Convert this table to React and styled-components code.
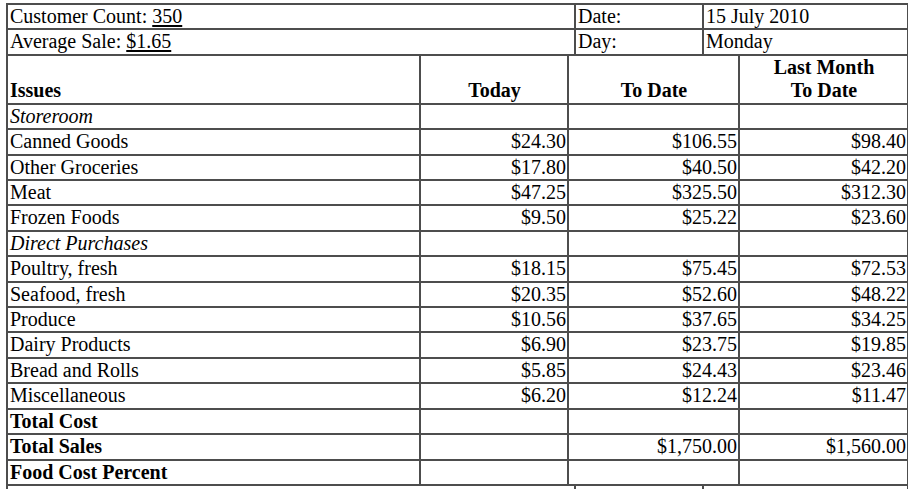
import React from 'react';
import styled, { createGlobalStyle } from 'styled-components';

const GlobalStyle = createGlobalStyle`
  body {
    margin: 0;
    background: #fff;
    color: #000;
    font-family: "Liberation Serif", "Times New Roman", serif;
    font-size: 20px;
  }
`;

const Sheet = styled.div`
  padding: 3px 0 0 6px;
  width: 901px;
`;

const Grid = styled.table`
  width: 901px;
  table-layout: fixed;
  border-collapse: collapse;
  border: 2px solid #4d4d4d;
  border-top-width: ${p => (p.$joined ? '0' : '2px')};

  & > colgroup + * > tr:first-child > * {
    border-top-width: ${p => (p.$joined ? '0' : '2px')};
  }
`;

const Col = styled.col`
  width: ${p => p.$w}px;
`;

const Cell = styled.td`
  border: 2px solid #4d4d4d;
  padding: 0 1px 0 2px;
  line-height: 23.4px;
  height: 23.4px;
  white-space: nowrap;
  overflow: hidden;
  text-align: ${p => (p.$num ? 'right' : 'left')};
  font-style: ${p => (p.$section ? 'italic' : 'normal')};
  font-weight: ${p => (p.$total ? 'bold' : 'normal')};
`;

const Head = styled.th`
  border: 2px solid #4d4d4d;
  padding: 0 1px 0 2px;
  line-height: 23.5px;
  vertical-align: bottom;
  font-weight: bold;
  text-align: ${p => (p.$left ? 'left' : 'center')};
`;

const Underlined = styled.span`
  text-decoration: underline;
  text-underline-offset: 2px;
`;

const info = [
  { label: 'Customer Count: ', value: '350', key: 'Date:', detail: '15 July 2010' },
  { label: 'Average Sale: ', value: '$1.65', key: 'Day:', detail: 'Monday' },
];

const rows = [
  { name: 'Storeroom', section: true },
  { name: 'Canned Goods', values: ['$24.30', '$106.55', '$98.40'] },
  { name: 'Other Groceries', values: ['$17.80', '$40.50', '$42.20'] },
  { name: 'Meat', values: ['$47.25', '$325.50', '$312.30'] },
  { name: 'Frozen Foods', values: ['$9.50', '$25.22', '$23.60'] },
  { name: 'Direct Purchases', section: true },
  { name: 'Poultry, fresh', values: ['$18.15', '$75.45', '$72.53'] },
  { name: 'Seafood, fresh', values: ['$20.35', '$52.60', '$48.22'] },
  { name: 'Produce', values: ['$10.56', '$37.65', '$34.25'] },
  { name: 'Dairy Products', values: ['$6.90', '$23.75', '$19.85'] },
  { name: 'Bread and Rolls', values: ['$5.85', '$24.43', '$23.46'] },
  { name: 'Miscellaneous', values: ['$6.20', '$12.24', '$11.47'] },
  { name: 'Total Cost', total: true },
  { name: 'Total Sales', total: true, values: ['', '$1,750.00', '$1,560.00'] },
  { name: 'Food Cost Percent', total: true },
];

const InfoTable = ({ lines, joined }) => (
  <Grid $joined={joined}>
    <colgroup>
      <Col $w={568} />
      <Col $w={128} />
      <Col $w={205} />
    </colgroup>
    <tbody>
      {lines.map((x, i) => (
        <tr key={'info' + i}>
          <Cell>
            {x.label}
            {x.value && <Underlined>{x.value}</Underlined>}
          </Cell>
          <Cell>{x.key}</Cell>
          <Cell>{x.detail}</Cell>
        </tr>
      ))}
    </tbody>
  </Grid>
);

const CostTable = () => (
  <Grid $joined>
    <colgroup>
      <Col $w={413} />
      <Col $w={148} />
      <Col $w={171} />
      <Col $w={169} />
    </colgroup>
    <thead>
      <tr>
        <Head $left>Issues</Head>
        <Head>Today</Head>
        <Head>To Date</Head>
        <Head>
          Last Month
          <br />
          To Date
        </Head>
      </tr>
    </thead>
    <tbody>
      {rows.map(r => {
        const values = r.values || ['', '', ''];
        return (
          <tr key={r.name}>
            <Cell $section={r.section} $total={r.total}>
              {r.name}
            </Cell>
            {values.map((v, i) => (
              <Cell $num key={r.name + i}>
                {v}
              </Cell>
            ))}
          </tr>
        );
      })}
    </tbody>
  </Grid>
);

export default function App() {
  return (
    <Sheet>
      <GlobalStyle />
      <InfoTable lines={info} />
      <CostTable />
      <InfoTable joined lines={[{ label: '', value: '', key: '', detail: '' }]} />
    </Sheet>
  );
}
